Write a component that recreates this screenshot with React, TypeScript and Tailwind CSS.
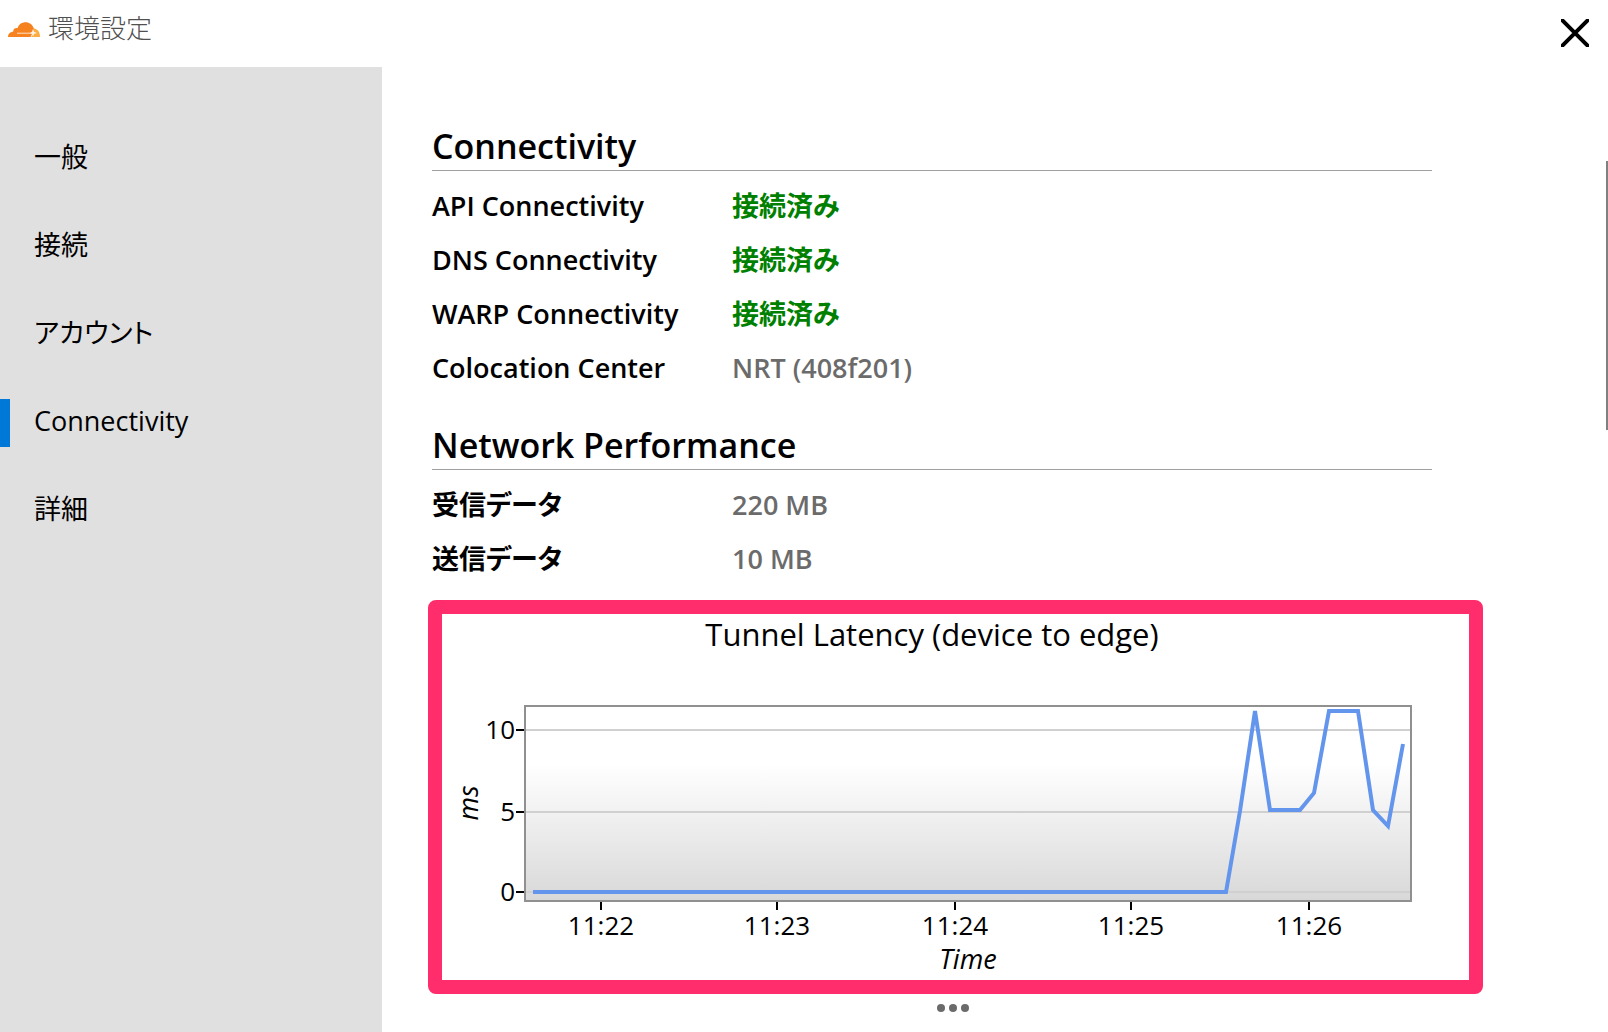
import { useState } from "react";
import clsx from "clsx";

const menuItems = ["一般", "接続", "アカウント", "Connectivity", "詳細"];

const connectivity = [
    { label: "API Connectivity", value: "接続済み", ok: true },
    { label: "DNS Connectivity", value: "接続済み", ok: true },
    { label: "WARP Connectivity", value: "接続済み", ok: true },
    { label: "Colocation Center", value: "NRT (408f201)" },
];

const performance = [
    { label: "受信データ", value: "220 MB" },
    { label: "送信データ", value: "10 MB" },
];

type Row = { label: string; value: string; ok?: boolean };

function CloudLogo() {
    return (
        <svg className="h-4 w-8" viewBox="0 0 32 16" aria-hidden="true">
            <path
                fill="#fbad41"
                d="M25 6.200c3.900 0 7 3.600 7 8.200 0 .4-.3.600-.7.600H20l2-6z"
            />
            <path
                fill="#f6821f"
                d="M0 15c0-3.200 2.200-5.300 5.200-5.300C5 7.400 7.200 5.400 9.600 6.200 10.600 2.400 14 .3 17.500.3c4 0 7.200 2.400 8.300 6.200l-2.800 8.500z"
            />
            <path
                fill="none"
                stroke="#ffe3c4"
                strokeWidth="1"
                d="M9 11.200h14.500M23 15l1-2.500"
            />
            <path fill="#fff3e2" d="M25 7l1 2.800 3 1.200-3 1-1 2.500-1-2.500-2-1 2-1.200z" />
        </svg>
    );
}

function Section({ title, rows }: { title: string; rows: Row[] }) {
    return (
        <section>
            <h2 className="mb-2 border-b border-[#a0a0a0] pt-0.5 text-[34px] leading-[47px] font-semibold">
                {title}
            </h2>
            <dl>
                {rows.map((row) => (
                    <div
                        key={row.label}
                        className="grid grid-cols-[300px_1fr] text-[27px] leading-[54px] font-semibold"
                    >
                        <dt>{row.label}</dt>
                        <dd className={row.ok ? "text-[#008000]" : "text-[#6b6b6b]"}>
                            {row.value}
                        </dd>
                    </div>
                ))}
            </dl>
        </section>
    );
}

const yTicks = [
    { label: "10", y: 116 },
    { label: "5", y: 198 },
    { label: "0", y: 278 },
];

const xTicks = [
    { label: "11:22", x: 159 },
    { label: "11:23", x: 335 },
    { label: "11:24", x: 513 },
    { label: "11:25", x: 689 },
    { label: "11:26", x: 867 },
];

function LatencyChart() {
    return (
        <svg className="block w-full" viewBox="0 0 1027 366" role="img" aria-label="Tunnel Latency">
            <defs>
                <linearGradient id="plot" x1="0" y1="0" x2="0" y2="1">
                    <stop offset="0.3" stopColor="#ffffff" />
                    <stop offset="1" stopColor="#d8d8d8" />
                </linearGradient>
            </defs>

            <text x="490" y="32" fontSize="31" textAnchor="middle">
                Tunnel Latency (device to edge)
            </text>

            <rect x="83" y="92" width="886" height="195" fill="url(#plot)" />
            {yTicks.map((tick) => (
                <g key={tick.label}>
                    <path d={`M84 ${tick.y}H968`} stroke="#d0d0d0" strokeWidth="2" />
                    <path d={`M74 ${tick.y}H82`} stroke="#000" strokeWidth="2" />
                    <text x="73" y={tick.y + 9} fontSize="26" textAnchor="end">
                        {tick.label}
                    </text>
                </g>
            ))}
            <rect x="83" y="92" width="886" height="195" fill="none" stroke="#909090" strokeWidth="2" />
            {xTicks.map((tick) => (
                <g key={tick.label}>
                    <path d={`M${tick.x} 288V296`} stroke="#000" strokeWidth="2" />
                    <text x={tick.x} y="321" fontSize="26" textAnchor="middle">
                        {tick.label}
                    </text>
                </g>
            ))}

            <polyline
                fill="none"
                stroke="#6495ed"
                strokeWidth="4"
                points="91,278 784,278 798,197 813,97 828,196 858,196 872,179 887,97 916,97 931,196 946,212 961,130"
            />

            <text x="526" y="355" fontSize="27" fontStyle="italic" textAnchor="middle">
                Time
            </text>
            <text transform="translate(36 189) rotate(-90)" fontSize="27" fontStyle="italic" textAnchor="middle">
                ms
            </text>
        </svg>
    );
}

export default function App() {
    const [current, setCurrent] = useState("Connectivity");

    return (
        <div className="flex h-screen flex-col overflow-hidden bg-white font-['Open_Sans','Noto_Sans_CJK_JP',sans-serif] text-black [font-feature-settings:'palt']">
            <header className="flex h-[67px] shrink-0 items-start justify-between pl-2">
                <div className="flex h-[60px] items-center gap-2">
                    <CloudLogo />
                    <h1 className="pb-1 text-[26px] font-light text-[#505050]">環境設定</h1>
                </div>
                <button type="button" aria-label="Close" className="p-[19px]">
                    <svg className="size-7" viewBox="0 0 28 28" aria-hidden="true">
                        <path d="M0 0l28 28M28 0L0 28" stroke="#000" strokeWidth="4" />
                    </svg>
                </button>
            </header>

            <div className="flex min-h-0 flex-1">
                <nav className="w-[382px] shrink-0 bg-[#e0e0e0] pt-12">
                    {menuItems.map((item) => (
                        <button
                            key={item}
                            type="button"
                            onClick={() => setCurrent(item)}
                            className="flex h-[88px] w-full items-center gap-6 text-left text-[27px]"
                        >
                            <span
                                className={clsx("h-12 w-2.5", item === current && "bg-[#0078d7]")}
                            />
                            <span className="pb-1">{item}</span>
                        </button>
                    ))}
                </nav>

                <main className="min-w-0 flex-1 pt-[54px] pr-[174px] pl-[50px]">
                    <Section title="Connectivity" rows={connectivity} />
                    <div className="mt-[25px]">
                        <Section title="Network Performance" rows={performance} />
                    </div>
                    <figure className="mt-3.5 -mr-[51px] -ml-1 rounded-lg border-[14px] border-[#ff2d6b]">
                        <LatencyChart />
                    </figure>
                    <div className="-mr-[42px] flex justify-center gap-1 pt-2.5">
                        <span className="size-2 rounded-full bg-[#6b6b6b]" />
                        <span className="size-2 rounded-full bg-[#6b6b6b]" />
                        <span className="size-2 rounded-full bg-[#6b6b6b]" />
                    </div>
                </main>

                {/* Scroll thumb */}
                <div className="mt-[94px] h-[269px] w-0.5 bg-[#808080]" />
            </div>
        </div>
    );
}
